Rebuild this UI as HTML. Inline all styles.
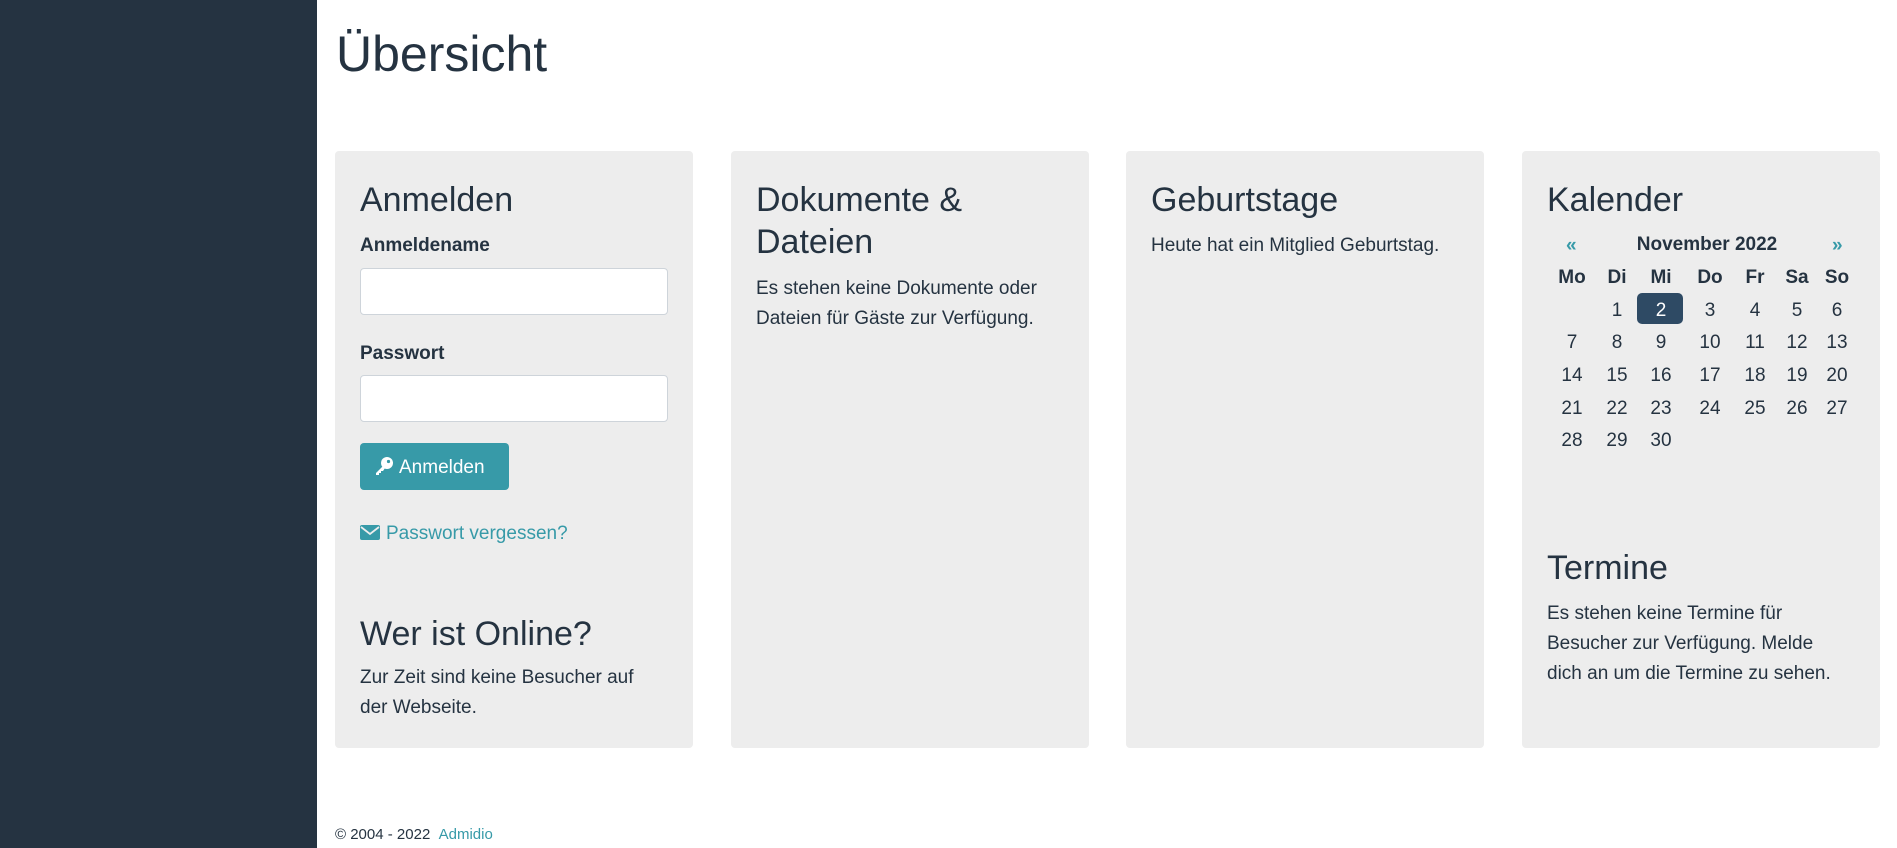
<!DOCTYPE html>
<html><head><meta charset="utf-8"><style>
*{box-sizing:border-box;margin:0;padding:0}
body{width:1897px;height:848px;overflow:hidden;background:#fff;font-family:"Liberation Sans",sans-serif;color:#253341;font-size:19px;position:relative}
.side{position:absolute;left:0;top:0;width:317px;height:848px;background:#253341}
h1{position:absolute;left:336px;top:24px;font-size:50px;font-weight:400;line-height:60px}
.card{position:absolute;top:151px;height:597px;width:358px;background:#ededed;border-radius:4px;padding:0 25px}
.abs{position:absolute;left:25px;white-space:nowrap}
h3{font-size:34px;font-weight:400;line-height:42px}
.t{line-height:30px}
.inp{position:absolute;left:25px;width:308px;height:47px;background:#fff;border:1px solid #ced4da;border-radius:4px}
.btn{position:absolute;left:25px;top:292px;width:149px;height:47px;background:#379aa8;border-radius:4px;color:#fff;font-size:19px;line-height:49px;padding-left:14px}
a{color:#379aa8;text-decoration:none}
.foot{position:absolute;left:335px;top:826px;font-size:15px}
</style></head><body>
<div class="side"></div>
<h1>Übersicht</h1>

<div class="card" style="left:335px">
 <h3 class="abs" style="top:28px">Anmelden</h3>
 <div class="abs" style="top:82px;font-weight:bold;line-height:26px">Anmeldename</div>
 <div class="inp" style="top:117px"></div>
 <div class="abs" style="top:190px;font-weight:bold;line-height:26px">Passwort</div>
 <div class="inp" style="top:224px"></div>
 <div class="btn"><svg width="20" height="20" viewBox="0 0 20 20" style="vertical-align:-3px;margin-right:5px"><circle cx="13" cy="7" r="6" fill="#fff"/><circle cx="14.5" cy="5.5" r="1.6" fill="#379aa8"/><path d="M9 10 L2 17 L2 19 L5 19 L5 17 L7 17 L7 15 L9 15 L11 12Z" fill="#fff"/></svg>Anmelden</div>
 <div class="abs" style="top:369px;line-height:28px"><a><svg width="20" height="15" viewBox="0 0 20 15" style="vertical-align:-1px;margin-right:6px"><rect width="20" height="15" rx="2" fill="#379aa8"/><path d="M1 2 L10 9 L19 2" stroke="#ededed" stroke-width="1.8" fill="none"/></svg>Passwort vergessen?</a></div>
 <h3 class="abs" style="top:462px">Wer ist Online?</h3>
 <div class="abs t" style="top:512px">Zur Zeit sind keine Besucher auf<br>der Webseite.</div>
</div>

<div class="card" style="left:731px">
 <h3 class="abs" style="top:28px">Dokumente &amp;<br>Dateien</h3>
 <div class="abs t" style="top:123px">Es stehen keine Dokumente oder<br>Dateien für Gäste zur Verfügung.</div>
</div>

<div class="card" style="left:1126px">
 <h3 class="abs" style="top:28px">Geburtstage</h3>
 <div class="abs t" style="top:80px">Heute hat ein Mitglied Geburtstag.</div>
</div>

<div class="card" style="left:1522px">
 <h3 class="abs" style="top:28px">Kalender</h3>
 <div class="abs" style="left:44px;top:84px;font-weight:bold;color:#379aa8">«</div>
 <div class="abs" style="left:85px;top:83px;width:200px;text-align:center;font-weight:bold">November 2022</div>
 <div class="abs" style="left:310px;top:84px;font-weight:bold;color:#379aa8">»</div>
 <div style="position:absolute;left:115px;top:142px;width:46px;height:31px;background:#2e4a64;border-radius:5px"></div>
 <div id="cal"></div>
 <h3 class="abs" style="top:396px">Termine</h3>
 <div class="abs t" style="top:448px">Es stehen keine Termine für<br>Besucher zur Verfügung. Melde<br>dich an um die Termine zu sehen.</div>
</div>

<div class="foot">© 2004 - 2022 &nbsp;<a>Admidio</a></div>

<script>
var xs=[50,95,139,188,233,275,315],ys=[127,160,192,225,258,290];
var h=["Mo","Di","Mi","Do","Fr","Sa","So"],out="";
for(var i=0;i<7;i++)out+='<div style="position:absolute;left:'+(xs[i]-25)+'px;width:50px;text-align:center;top:'+(ys[0]-11)+'px;font-weight:bold;line-height:22px">'+h[i]+'</div>';
for(var d=1;d<=30;d++){var idx=d;var r=Math.floor(idx/7)+1,c=idx%7;
out+='<div style="position:absolute;left:'+(xs[c]-25)+'px;width:50px;text-align:center;top:'+(ys[r]-11)+'px;line-height:22px;'+(d==2?'color:#fff':'')+'">'+d+'</div>';}
document.getElementById("cal").innerHTML=out;
</script>
</body></html>
